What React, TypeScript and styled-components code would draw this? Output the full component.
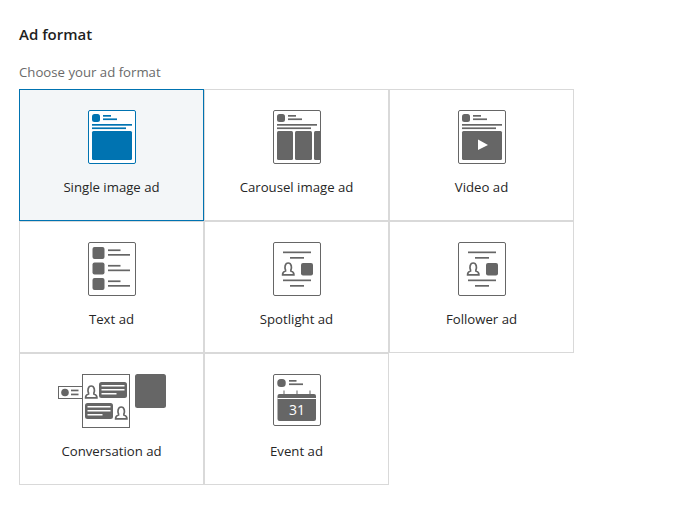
import React from 'react';
import styled, {createGlobalStyle} from 'styled-components';

const GRAY = '#666666';
const BLUE = '#0073b1';

const GlobalStyle = createGlobalStyle`
  html, body {
    margin: 0;
    padding: 0;
    background: #ffffff;
    font-family: "Open Sans", "Liberation Sans", sans-serif;
  }
`;

const Page = styled.main`
  width: 698px;
  height: 505px;
  box-sizing: border-box;
  padding: 24px 0 0 19px;
  overflow: hidden;
`;

const Title = styled.h2`
  margin: 0;
  font-size: 15px;
  line-height: 20px;
  font-weight: 600;
  color: #1f1f1f;
`;

const Hint = styled.p`
  margin: 18px 0 0;
  font-size: 13.2px;
  line-height: 20px;
  color: #6a6a6a;
`;

const Grid = styled.div`
  display: grid;
  grid-template-columns: repeat(3, 185px);
  grid-auto-rows: 132px;
  margin-top: 7px;
`;

const Tile = styled.button<{$selected?: boolean}>`
  display: flex;
  flex-direction: column;
  align-items: center;
  box-sizing: border-box;
  padding: 20px 0 0;
  margin: 0;
  border: 1px solid ${(props) => (props.$selected ? BLUE : '#d9d9d9')};
  background: ${(props) => (props.$selected ? '#f3f6f8' : '#ffffff')};
  font-family: inherit;
  cursor: pointer;
`;

const Label = styled.span`
  margin-top: 13px;
  font-size: 13.2px;
  line-height: 20px;
  color: #262626;
`;

const IconSvg = styled.svg`
  display: block;
`;

const Sheet = ({h = 53, color}: {h?: number; color: string}) => (
  <rect x={0.5} y={0.5} width={47} height={h} rx={1.5} fill="#fff" stroke={color} />
);

const Bar = ({x, y, w, color = GRAY}: {x: number; y: number; w: number; color?: string}) => (
  <rect x={x} y={y} width={w} height={1.7} fill={color} />
);

const PostHead = ({color}: {color: string}) => (
  <>
    <rect x={4} y={4} width={8} height={8} rx={2.5} fill={color} />
    <Bar x={15} y={5} w={8} color={color} />
    <Bar x={15} y={8.4} w={14} color={color} />
    <Bar x={4} y={14} w={40} color={color} />
    <Bar x={4} y={17.4} w={34} color={color} />
  </>
);

const Frame = ({children, width = 48}: {children: React.ReactNode; width?: number}) => (
  <IconSvg width={width} height={54} viewBox={`0 0 ${width} 54`}>
    {children}
  </IconSvg>
);

const Person = ({x, y}: {x: number; y: number}) => (
  <path
    transform={`translate(${x} ${y})`}
    d="M4 8 C3 6 3.2 1 6.7 1 C10.2 1 10.4 6 9.4 8 L9.4 9 Q12.5 9.8 12.4 12.8 L1.1 12.8 Q1 9.8 4 9 Z"
    fill="none"
    stroke={GRAY}
    strokeWidth={1.7}
  />
);

const SingleIcon = () => (
  <Frame>
    <Sheet color={BLUE} />
    <PostHead color={BLUE} />
    <rect x={4} y={21} width={40} height={29} rx={1.5} fill={BLUE} />
  </Frame>
);

const CarouselIcon = () => (
  <Frame>
    <Sheet color={GRAY} />
    <PostHead color={GRAY} />
    <rect x={4} y={21} width={16} height={29} rx={1.5} fill={GRAY} />
    <rect x={22} y={21} width={17} height={29} rx={1.5} fill={GRAY} />
    <path d="M48 21 L42.5 21 Q41 21 41 22.5 L41 48.5 Q41 50 42.5 50 L48 50 Z" fill={GRAY} />
  </Frame>
);

const VideoIcon = () => (
  <Frame>
    <Sheet color={GRAY} />
    <PostHead color={GRAY} />
    <rect x={4} y={21} width={40} height={29} rx={1.5} fill={GRAY} />
    <path d="M20 29.5 L30 35 L20 40 Z" fill="#fff" />
  </Frame>
);

const TextIcon = () => (
  <Frame>
    <Sheet color={GRAY} />
    {[5, 20.5, 36].map((y) => (
      <g key={y}>
        <rect x={4.5} y={y} width={12} height={12} rx={2} fill={GRAY} />
        <Bar x={20} y={y + 2.4} w={12.5} />
        <Bar x={20} y={y + 7} w={22} />
      </g>
    ))}
  </Frame>
);

const SpotlightIcon = () => (
  <Frame>
    <Sheet color={GRAY} />
    <Bar x={10} y={9.5} w={28} />
    <Bar x={17} y={15} w={14} />
    <Person x={8.5} y={20} />
    <rect x={28} y={21} width={12} height={12.5} rx={2} fill={GRAY} />
    <Bar x={10} y={37.5} w={28} />
    <Bar x={17} y={43} w={14} />
  </Frame>
);

const ConversationIcon = () => (
  <Frame width={108}>
    <rect x={0.5} y={12.5} width={24} height={12} fill="#fff" stroke={GRAY} />
    <circle cx={7} cy={18.5} r={3.8} fill={GRAY} />
    <Bar x={13} y={15.6} w={7.5} />
    <Bar x={13} y={19.6} w={7.5} />
    <rect x={24.5} y={0.5} width={47} height={53} fill="#fff" stroke={GRAY} />
    <Person x={26.5} y={11} />
    <rect x={41} y={8} width={28} height={16} rx={2.5} fill={GRAY} />
    <rect x={43.5} y={11} width={23} height={1.5} fill="#fff" />
    <rect x={43.5} y={15} width={23} height={1.5} fill="#fff" />
    <rect x={43.5} y={19} width={15} height={1.5} fill="#fff" />
    <rect x={27} y={29} width={28} height={16} rx={2.5} fill={GRAY} />
    <rect x={29.5} y={32} width={23} height={1.5} fill="#fff" />
    <rect x={29.5} y={36} width={23} height={1.5} fill="#fff" />
    <rect x={29.5} y={40} width={15} height={1.5} fill="#fff" />
    <Person x={56.5} y={32} />
    <rect x={77} y={0} width={31} height={34} rx={2.5} fill={GRAY} />
  </Frame>
);

const CalendarDay = styled.text`
  font-family: "Open Sans", "Liberation Sans", sans-serif;
  font-size: 14px;
  fill: #ffffff;
  text-anchor: middle;
`;

const EventIcon = () => (
  <Frame>
    <Sheet color={GRAY} h={51} />
    <rect x={4.3} y={5} width={8.4} height={8} rx={3.5} fill={GRAY} />
    <Bar x={16} y={6} w={7.5} />
    <Bar x={16} y={9.4} w={14} />
    <rect x={10.5} y={16.5} width={1} height={4} fill={GRAY} />
    <rect x={23.5} y={16.5} width={1} height={4} fill={GRAY} />
    <rect x={36.5} y={16.5} width={1} height={4} fill={GRAY} />
    <rect x={4.5} y={20} width={38.5} height={27} rx={2} fill={GRAY} />
    <rect x={4.5} y={24} width={38.5} height={1} fill="#fff" />
    <CalendarDay x={24} y={41}>31</CalendarDay>
  </Frame>
);

const formats = [
  {label: 'Single image ad', Icon: SingleIcon, selected: true},
  {label: 'Carousel image ad', Icon: CarouselIcon},
  {label: 'Video ad', Icon: VideoIcon},
  {label: 'Text ad', Icon: TextIcon},
  {label: 'Spotlight ad', Icon: SpotlightIcon},
  {label: 'Follower ad', Icon: SpotlightIcon},
  {label: 'Conversation ad', Icon: ConversationIcon},
  {label: 'Event ad', Icon: EventIcon},
];

export default function App() {
  return (
    <Page>
      <GlobalStyle />
      <Title>Ad format</Title>
      <Hint>Choose your ad format</Hint>
      <Grid>
        {formats.map(({label, Icon, selected}) => (
          <Tile key={label} $selected={selected}>
            <Icon />
            <Label>{label}</Label>
          </Tile>
        ))}
      </Grid>
    </Page>
  );
}
